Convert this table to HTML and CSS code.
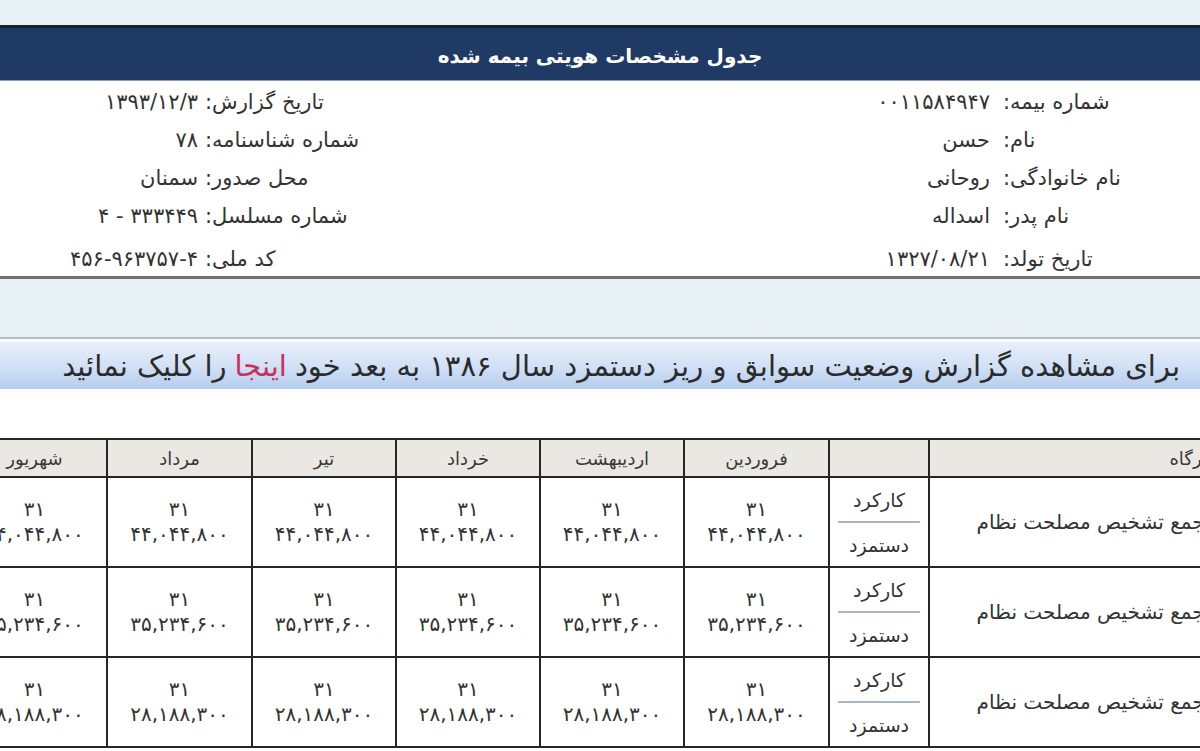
FILE: index.html
```html
<!DOCTYPE html>
<html lang="fa" dir="rtl">
<head>
<meta charset="utf-8">
<title>جدول مشخصات هویتی بیمه شده</title>
<link rel="stylesheet" href="styles.css">
</head>
<body>
<div class="page">
  <div class="topstrip"></div>
  <div class="titlebar">جدول مشخصات هویتی بیمه شده</div>
  <div class="info">
    <div class="col col-right">
      <div class="lbl">شماره بیمه:</div><div class="val"><span class="num">۰۰۱۱۵۸۴۹۴۷</span></div>
      <div class="lbl">نام:</div><div class="val">حسن</div>
      <div class="lbl">نام خانوادگی:</div><div class="val">روحانی</div>
      <div class="lbl">نام پدر:</div><div class="val">اسداله</div>
      <div class="lbl last">تاریخ تولد:</div><div class="val last"><span class="num">۱۳۲۷/۰۸/۲۱</span></div>
    </div>
    <div class="col col-left">
      <div class="lbl">تاریخ گزارش:</div><div class="val"><span class="num">۱۳۹۳/۱۲/۳</span></div>
      <div class="lbl">شماره شناسنامه:</div><div class="val"><span class="num">۷۸</span></div>
      <div class="lbl">محل صدور:</div><div class="val">سمنان</div>
      <div class="lbl">شماره مسلسل:</div><div class="val"><span class="num">۴ - ۳۳۳۴۴۹</span></div>
      <div class="lbl last">کد ملی:</div><div class="val last"><span class="num">۴۵۶-۹۶۳۷۵۷-۴</span></div>
    </div>
  </div>
  <div class="band"></div>
  <div class="banner">برای مشاهده گزارش وضعیت سوابق و ریز دستمزد سال ۱۳۸۶ به بعد خود <a class="here" href="#">اینجا</a> را کلیک نمائید</div>
  <div class="gap"></div>
  <div class="tablewrap">
    <table class="grid">
      <colgroup>
        <col class="c-work"><col class="c-label"><col class="c-m1"><col class="c-m"><col class="c-m"><col class="c-m"><col class="c-m1"><col class="c-m1">
      </colgroup>
      <thead>
        <tr>
          <th class="h-work">نام کارگاه</th>
          <th></th>
          <th>فروردین</th>
          <th>اردیبهشت</th>
          <th>خرداد</th>
          <th>تیر</th>
          <th>مرداد</th>
          <th>شهریور</th>
        </tr>
      </thead>
      <tbody>
        <tr>
          <td class="work">مجمع تشخیص مصلحت نظام</td>
          <td class="labels"><div class="lab-top">کارکرد</div><div class="lab-sep"></div><div class="lab-bot">دستمزد</div></td>
          <td class="m"><div>۳۱</div><div class="num">۴۴,۰۴۴,۸۰۰</div></td>
          <td class="m"><div>۳۱</div><div class="num">۴۴,۰۴۴,۸۰۰</div></td>
          <td class="m"><div>۳۱</div><div class="num">۴۴,۰۴۴,۸۰۰</div></td>
          <td class="m"><div>۳۱</div><div class="num">۴۴,۰۴۴,۸۰۰</div></td>
          <td class="m"><div>۳۱</div><div class="num">۴۴,۰۴۴,۸۰۰</div></td>
          <td class="m"><div>۳۱</div><div class="num">۴۴,۰۴۴,۸۰۰</div></td>
        </tr>
        <tr>
          <td class="work">مجمع تشخیص مصلحت نظام</td>
          <td class="labels"><div class="lab-top">کارکرد</div><div class="lab-sep"></div><div class="lab-bot">دستمزد</div></td>
          <td class="m"><div>۳۱</div><div class="num">۳۵,۲۳۴,۶۰۰</div></td>
          <td class="m"><div>۳۱</div><div class="num">۳۵,۲۳۴,۶۰۰</div></td>
          <td class="m"><div>۳۱</div><div class="num">۳۵,۲۳۴,۶۰۰</div></td>
          <td class="m"><div>۳۱</div><div class="num">۳۵,۲۳۴,۶۰۰</div></td>
          <td class="m"><div>۳۱</div><div class="num">۳۵,۲۳۴,۶۰۰</div></td>
          <td class="m"><div>۳۱</div><div class="num">۳۵,۲۳۴,۶۰۰</div></td>
        </tr>
        <tr>
          <td class="work">مجمع تشخیص مصلحت نظام</td>
          <td class="labels"><div class="lab-top">کارکرد</div><div class="lab-sep"></div><div class="lab-bot">دستمزد</div></td>
          <td class="m"><div>۳۱</div><div class="num">۲۸,۱۸۸,۳۰۰</div></td>
          <td class="m"><div>۳۱</div><div class="num">۲۸,۱۸۸,۳۰۰</div></td>
          <td class="m"><div>۳۱</div><div class="num">۲۸,۱۸۸,۳۰۰</div></td>
          <td class="m"><div>۳۱</div><div class="num">۲۸,۱۸۸,۳۰۰</div></td>
          <td class="m"><div>۳۱</div><div class="num">۲۸,۱۸۸,۳۰۰</div></td>
          <td class="m"><div>۳۱</div><div class="num">۲۸,۱۸۸,۳۰۰</div></td>
        </tr>
      </tbody>
    </table>
  </div>
</div>
</body>
</html>
```
FILE: styles.css
```css
html, body {
  margin: 0;
  padding: 0;
  overflow: hidden;
  background: #ffffff;
}
body {
  width: 1200px;
  height: 751px;
  font-family: "DejaVu Sans", "Noto Sans", sans-serif;
  color: #333333;
}
.page {
  direction: rtl;
  width: 1200px;
  height: 751px;
  overflow: hidden;
}
.topstrip {
  height: 25px;
  background: #e8f1f6;
}
.titlebar {
  border-top: 3px solid #1b1f26;
  border-bottom: 1px solid #8c98a8;
  background: #1f3a64;
  color: #ffffff;
  font-size: 20px;
  font-weight: bold;
  display: flex;
  align-items: center;
  justify-content: center;
  padding-top: 3px;
  box-sizing: border-box;
  height: 56px;
}
.info {
  height: 195px;
  padding-top: 2px;
  box-sizing: border-box;
  display: flex;
  justify-content: space-between;
  font-size: 21px;
  color: #333333;
}
.col {
  display: grid;
  grid-template-rows: repeat(4, 38px) 41px;
  align-items: center;
}
.col-right {
  margin-right: 50px;
  grid-template-columns: 147px 150px;
  column-gap: 13px;
}
.col-left {
  margin-left: 30px;
  grid-template-columns: 180px 168px;
  column-gap: 7px;
}
.lbl {
  text-align: left;
  white-space: nowrap;
}
.val {
  text-align: right;
  white-space: nowrap;
}
.last {
  padding-top: 7px;
}
.num {
  direction: ltr;
  unicode-bidi: isolate;
}
span.num {
  display: inline-block;
  letter-spacing: 2.6px;
}
.band {
  height: 58px;
  border-top: 3px solid #6d6f72;
  border-bottom: 2px solid #b9bec3;
  background: #e6f0f5;
}
.banner {
  margin-top: 3px;
  height: 47px;
  background: linear-gradient(to bottom, #e8eff9 0%, #d2e1f5 50%, #b6cdee 100%);
  font-size: 29px;
  color: #2b2b2b;
  display: flex;
  align-items: center;
  padding-right: 20px;
  white-space: nowrap;
  overflow: hidden;
}
.here {
  color: #c9305c;
  text-decoration: none;
  margin: 0 8px;
}
.gap {
  height: 49px;
  background: #ffffff;
}
.tablewrap {
  margin-right: -60px;
}
.grid {
  border-collapse: collapse;
  table-layout: fixed;
  width: 1297px;
  border: 2px solid #262626;
}
.c-work { width: 330px; }
.c-label { width: 100px; }
.c-m { width: 144px; }
.c-m1 { width: 145px; }
.grid th {
  height: 36px;
  background: #ebe8e3;
  border: 2px solid #262626;
  font-weight: normal;
  font-size: 18px;
  color: #3a3a3a;
  text-align: center;
  padding: 0;
}
.grid th.h-work {
  text-align: right;
  padding-right: 15px;
}
.grid td {
  height: 87px;
  border: 2px solid #262626;
  padding: 0;
  font-size: 20px;
  color: #333333;
  text-align: center;
  vertical-align: middle;
}
.grid td.work {
  text-align: right;
  padding-right: 42px;
  font-size: 20px;
}
.grid td.m div {
  line-height: 25px;
}
.grid td.m div.num {
  letter-spacing: 1.5px;
}
.grid td.labels {
  font-size: 19px;
}
.lab-top, .lab-bot {
  height: 43px;
  display: flex;
  align-items: center;
  justify-content: center;
}
.lab-sep {
  height: 2px;
  margin: 0 8px;
  background: #a9b5c8;
}
```
